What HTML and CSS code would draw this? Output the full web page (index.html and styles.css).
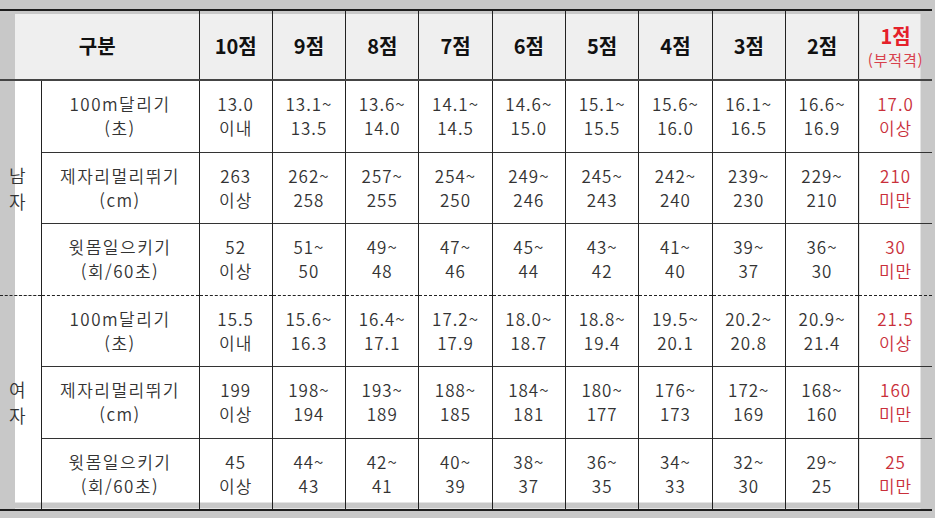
FILE: index.html
```html
<!DOCTYPE html>
<html lang="ko">
<head>
<meta charset="utf-8">
<link rel="stylesheet" href="styles.css">
</head>
<body>
<div class="page">
<table class="grade">
  <colgroup>
    <col class="c-sex"><col class="c-event">
    <col class="c-pt"><col class="c-pt"><col class="c-pt"><col class="c-pt"><col class="c-pt">
    <col class="c-pt"><col class="c-pt"><col class="c-pt"><col class="c-pt"><col class="c-pt">
  </colgroup>
  <thead>
    <tr>
      <th colspan="2" class="h-first">구분</th>
      <th>10점</th><th>9점</th><th>8점</th><th>7점</th><th>6점</th>
      <th>5점</th><th>4점</th><th>3점</th><th>2점</th>
      <th class="h-last"><span class="fail">1점</span><span class="fail-sub">(부적격)</span></th>
    </tr>
  </thead>
  <tbody>
    <tr>
      <td rowspan="3" class="sex">남<br>자</td>
      <td class="event">100m달리기<br>(초)</td>
      <td>13.0<br>이내</td><td>13.1~<br>13.5</td><td>13.6~<br>14.0</td><td>14.1~<br>14.5</td><td>14.6~<br>15.0</td>
      <td>15.1~<br>15.5</td><td>15.6~<br>16.0</td><td>16.1~<br>16.5</td><td>16.6~<br>16.9</td>
      <td class="last">17.0<br>이상</td>
    </tr>
    <tr>
      <td class="event">제자리멀리뛰기<br>(cm)</td>
      <td>263<br>이상</td><td>262~<br>258</td><td>257~<br>255</td><td>254~<br>250</td><td>249~<br>246</td>
      <td>245~<br>243</td><td>242~<br>240</td><td>239~<br>230</td><td>229~<br>210</td>
      <td class="last">210<br>미만</td>
    </tr>
    <tr>
      <td class="event">윗몸일으키기<br>(회/60초)</td>
      <td>52<br>이상</td><td>51~<br>50</td><td>49~<br>48</td><td>47~<br>46</td><td>45~<br>44</td>
      <td>43~<br>42</td><td>41~<br>40</td><td>39~<br>37</td><td>36~<br>30</td>
      <td class="last">30<br>미만</td>
    </tr>
    <tr class="group-start">
      <td rowspan="3" class="sex sex-bottom">여<br>자</td>
      <td class="event">100m달리기<br>(초)</td>
      <td>15.5<br>이내</td><td>15.6~<br>16.3</td><td>16.4~<br>17.1</td><td>17.2~<br>17.9</td><td>18.0~<br>18.7</td>
      <td>18.8~<br>19.4</td><td>19.5~<br>20.1</td><td>20.2~<br>20.8</td><td>20.9~<br>21.4</td>
      <td class="last">21.5<br>이상</td>
    </tr>
    <tr>
      <td class="event">제자리멀리뛰기<br>(cm)</td>
      <td>199<br>이상</td><td>198~<br>194</td><td>193~<br>189</td><td>188~<br>185</td><td>184~<br>181</td>
      <td>180~<br>177</td><td>176~<br>173</td><td>172~<br>169</td><td>168~<br>160</td>
      <td class="last">160<br>미만</td>
    </tr>
    <tr class="row-end">
      <td class="event">윗몸일으키기<br>(회/60초)</td>
      <td>45<br>이상</td><td>44~<br>43</td><td>42~<br>41</td><td>40~<br>39</td><td>38~<br>37</td>
      <td>36~<br>35</td><td>34~<br>33</td><td>32~<br>30</td><td>29~<br>25</td>
      <td class="last">25<br>미만</td>
    </tr>
  </tbody>
</table>
</div>
</body>
</html>
```

FILE: styles.css
```css
html, body {
  margin: 0;
  padding: 0;
  background: #c8c8c8;
}

.page {
  width: 935px;
  height: 518px;
  padding-top: 9px;
  box-sizing: border-box;
  background: #c8c8c8;
  overflow: hidden;
}

.grade {
  width: 932px;
  border-collapse: collapse;
  table-layout: fixed;
  font-family: "Noto Sans CJK KR", "Noto Sans", sans-serif;
  border-top: 2px solid #1e1e1e;
  border-bottom: 2px solid #1e1e1e;
}

.c-sex { width: 41px; }
.c-event { width: 158px; }
.c-pt { width: 73.3px; }

.grade th {
  height: 68px;
  padding: 0;
  font-size: 20px;
  font-weight: 700;
  color: #111;
  text-align: center;
  vertical-align: middle;
  border-left: 1px solid #222;
  border-bottom: 2px solid #444;
  background: linear-gradient(#c8c8c8 0 3px, #efefef 3px);
}

.grade th.h-first {
  border-left: none;
  padding-right: 4px;
  background:
    linear-gradient(to right, #c8c8c8 0 15px, transparent 15px),
    linear-gradient(#c8c8c8 0 3px, #efefef 3px);
}

.grade th.h-last {
  background:
    linear-gradient(to right, transparent 0 61px, #c8c8c8 61px),
    linear-gradient(#c8c8c8 0 3px, #efefef 3px);
  line-height: 1;
}

.fail {
  display: block;
  color: #e5202a;
  font-size: 20px;
  padding-top: 2px;
}

.fail-sub {
  display: block;
  color: #d8414c;
  font-size: 15px;
  font-weight: 400;
  margin-top: 6px;
  letter-spacing: 0.8px;
}

.grade td {
  height: 70.5px;
  padding: 0;
  font-size: 17px;
  font-weight: 350;
  line-height: 24px;
  letter-spacing: 1px;
  color: #333;
  text-align: center;
  vertical-align: middle;
  background: #fff;
  border-left: 1px solid #222;
  border-top: 1px solid #333;
}

.grade td.event {
  letter-spacing: 1.5px;
}

.grade td.sex {
  border-left: none;
  border-top: none;
  font-size: 18px;
  line-height: 26px;
  color: #333;
  padding-right: 5px;
  background: linear-gradient(to right, #c8c8c8 0 15px, #fff 15px);
}

.grade td.sex-bottom {
  background:
    linear-gradient(to bottom, transparent 0 calc(100% - 6px), #c8c8c8 calc(100% - 6px)),
    linear-gradient(to right, #c8c8c8 0 15px, #fff 15px);
}

.grade td.last {
  color: #c92f3a;
  background: linear-gradient(to right, #fff 0 61px, #c8c8c8 61px);
}

.grade tr.group-start td {
  border-top: 1px dashed #222;
}

.grade tr.row-end td {
  background: linear-gradient(to bottom, #fff 0 calc(100% - 6px), #c8c8c8 calc(100% - 6px));
}

.grade tr.row-end td.last {
  background:
    linear-gradient(to bottom, transparent 0 calc(100% - 6px), #c8c8c8 calc(100% - 6px)),
    linear-gradient(to right, #fff 0 61px, #c8c8c8 61px);
}
```
